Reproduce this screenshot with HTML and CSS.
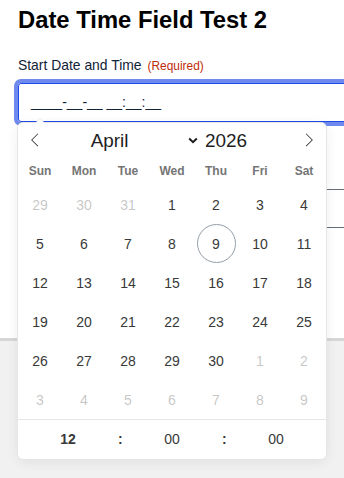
FILE: index.html
```html
<!DOCTYPE html>
<html lang="en">
<head>
<meta charset="utf-8">
<title>Date Time Field Test 2</title>
<link rel="stylesheet" href="styles.css">
</head>
<body>
<div class="page">
  <h1 class="title">Date Time Field Test 2</h1>
  <div class="field">
    <div class="label">Start Date and Time <span class="required">(Required)</span></div>
    <div class="input focused">____-__-__ __:__:__</div>
  </div>
  <div class="field field-second">
    <div class="input"></div>
  </div>
</div>
<div class="footer"></div>

<div class="calendar">
  <div class="cal-head">
    <span class="nav-btn">
      <svg width="14" height="14" viewBox="0 0 17 17"><path d="M5.207 8.471l7.146 7.147-0.707 0.707-7.853-7.854 7.854-7.853 0.707 0.707-7.146 7.146z"/></svg>
    </span>
    <div class="current">
      <span class="month">April</span>
      <svg class="chev" width="10" height="7" viewBox="0 0 10 7"><polyline points="1.2,1.5 5,5.2 8.8,1.5" fill="none" stroke="#1a1a1a" stroke-width="1.9"/></svg>
      <span class="year">2026</span>
    </div>
    <span class="nav-btn">
      <svg width="14" height="14" viewBox="0 0 17 17"><path d="M13.207 8.472l-7.854 7.854-0.707-0.707 7.146-7.146-7.146-7.148 0.707-0.707 7.854 7.854z"/></svg>
    </span>
  </div>
  <div class="weekdays">
    <span>Sun</span><span>Mon</span><span>Tue</span><span>Wed</span><span>Thu</span><span>Fri</span><span>Sat</span>
  </div>
  <div class="days">
    <span class="day other">29</span><span class="day other">30</span><span class="day other">31</span><span class="day">1</span><span class="day">2</span><span class="day">3</span><span class="day">4</span>
    <span class="day">5</span><span class="day">6</span><span class="day">7</span><span class="day">8</span><span class="day today">9</span><span class="day">10</span><span class="day">11</span>
    <span class="day">12</span><span class="day">13</span><span class="day">14</span><span class="day">15</span><span class="day">16</span><span class="day">17</span><span class="day">18</span>
    <span class="day">19</span><span class="day">20</span><span class="day">21</span><span class="day">22</span><span class="day">23</span><span class="day">24</span><span class="day">25</span>
    <span class="day">26</span><span class="day">27</span><span class="day">28</span><span class="day">29</span><span class="day">30</span><span class="day other">1</span><span class="day other">2</span>
    <span class="day other">3</span><span class="day other">4</span><span class="day other">5</span><span class="day other">6</span><span class="day other">7</span><span class="day other">8</span><span class="day other">9</span>
  </div>
  <div class="time">
    <span class="hour">12</span><span class="sep">:</span><span>00</span><span class="sep">:</span><span>00</span>
  </div>
</div>
</body>
</html>
```
FILE: styles.css
```css
html, body {
  margin: 0;
  padding: 0;
  height: 478px;
  overflow: hidden;
  background: #f1f1f1;
  font-family: "Liberation Sans", Arial, sans-serif;
}

.page {
  padding: 6px 0 110px 18px;
  background: #ffffff;
  overflow: hidden;
}

.title {
  margin: 0 0 22px;
  font-size: 23.8px;
  line-height: 28.8px;
  font-weight: bold;
  color: #000000;
}

.label {
  display: flex;
  align-items: baseline;
  font-size: 13.9px;
  line-height: 16.8px;
  color: #112337;
  margin-bottom: 8.5px;
  white-space: nowrap;
}

.required {
  font-size: 11.9px;
  color: #c02b0a;
  margin-left: 6px;
}

.input {
  box-sizing: border-box;
  width: 345px;
  height: 39px;
  border: 1px solid #686e77;
  border-radius: 3px;
  padding: 0 12px;
  font-size: 14px;
  line-height: 37px;
  color: #112337;
}

.input.focused {
  border-color: #204ce5;
  box-shadow: 0 0 0 4px rgba(32, 76, 229, 0.65);
}

.field-second {
  margin-top: 67px;
}

.footer {
  border-top: 3.5px solid #d6d6d6;
  background: #f1f1f1;
  height: 137px;
}

/* calendar popup */
.calendar {
  position: absolute;
  top: 123px;
  left: 18px;
  width: 308px;
  background: #ffffff;
  border-radius: 5px;
  box-shadow: 1px 0 0 #e6e6e6, -1px 0 0 #e6e6e6, 0 1px 0 #e6e6e6, 0 -1px 0 #e6e6e6, 0 3px 13px rgba(0, 0, 0, 0.08);
  color: #393939;
  font-size: 14px;
}

.calendar::before,
.calendar::after {
  content: "";
  position: absolute;
  border: solid transparent;
  height: 0;
  width: 0;
}

.calendar::before {
  left: 17px;
  top: -10px;
  border-width: 5px;
  border-bottom-color: #e6e6e6;
}

.calendar::after {
  left: 18px;
  top: -8px;
  border-width: 4px;
  border-bottom-color: #ffffff;
}

.cal-head {
  display: flex;
  align-items: center;
  height: 34px;
}

.nav-btn {
  display: flex;
  width: 14px;
  height: 14px;
  padding: 10px;
  fill: #3a3a3a;
}

.current {
  flex: 1;
  display: flex;
  align-items: center;
  padding-top: 2px;
  font-size: 18.9px;
  line-height: 22px;
  color: #1e1e1e;
}

.month {
  margin-left: 38.7px;
  width: 97.3px;
}

.chev {
  display: block;
  margin-top: -1px;
}

.year {
  margin-left: 7px;
}

.weekdays {
  display: grid;
  grid-template-columns: repeat(7, 1fr);
  height: 28px;
  line-height: 28px;
  font-size: 12px;
  font-weight: bold;
  color: #757575;
  text-align: center;
}

.days {
  display: grid;
  grid-template-columns: repeat(7, 1fr);
  grid-auto-rows: 39px;
}

.day {
  justify-self: center;
  box-sizing: border-box;
  width: 39px;
  height: 39px;
  line-height: 39px;
  text-align: center;
  border-radius: 50%;
  border: 1px solid transparent;
}

.day.other {
  color: rgba(57, 57, 57, 0.3);
}

.day.today {
  border-color: #959ea9;
}

.time {
  box-sizing: border-box;
  height: 40px;
  border-top: 1px solid #e6e6e6;
  display: grid;
  grid-template-columns: 1fr 4px 1fr 4px 1fr;
  align-items: center;
  text-align: center;
  line-height: 39px;
}

.hour,
.sep {
  font-weight: bold;
}
```
